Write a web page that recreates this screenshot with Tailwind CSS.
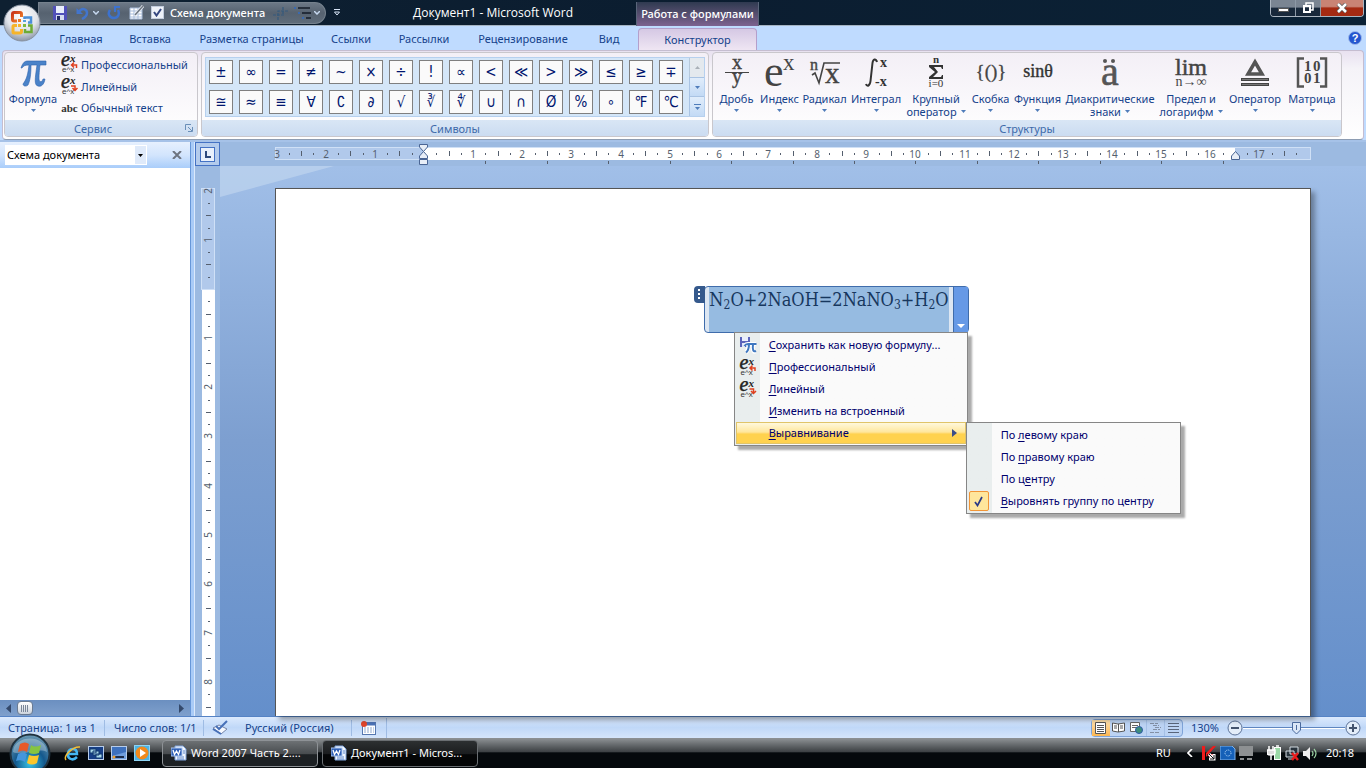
<!DOCTYPE html>
<html lang="ru">
<head>
    <meta charset="UTF-8">
    <meta name="viewport" content="width=device-width, initial-scale=1.0">
    <title>Документ1 - Microsoft Word</title>
    <script src="https://cdn.jsdelivr.net/npm/@tailwindcss/browser@4"></script>
</head>
<body class="h-screen flex flex-col overflow-hidden bg-[#bfdbff] font-['Noto_Sans','Open_Sans',sans-serif] text-[11px] leading-4 text-[#15428b]">

    <!-- Shared icons -->
    <svg class="hidden">
        <symbol id="ex-up" viewBox="0 0 17 17" overflow="visible">
            <text x="0" y="10" font-family="Liberation Serif" font-size="20" font-style="italic" stroke="#222" stroke-width=".5" fill="#222">e</text>
            <text x="9" y="6" font-family="Liberation Serif" font-size="11" font-style="italic" font-weight="bold" fill="#222">x</text>
            <text x="1" y="16" font-family="Liberation Sans" font-size="8" fill="#333">e^x</text>
            <path d="M15.500 12V9H11M13 6.500L10.500 9L13 11.500" fill="none" stroke="#e0401f" stroke-width="1.500"/>
        </symbol>
        <symbol id="ex-down" viewBox="0 0 17 17" overflow="visible">
            <text x="0" y="10" font-family="Liberation Serif" font-size="20" font-style="italic" stroke="#222" stroke-width=".5" fill="#222">e</text>
            <text x="9" y="6" font-family="Liberation Serif" font-size="11" font-style="italic" font-weight="bold" fill="#222">x</text>
            <text x="1" y="16" font-family="Liberation Sans" font-size="8" fill="#333">e^x</text>
            <path d="M10 8H14V12M11.500 10L14 12.500L16.500 10" fill="none" stroke="#e0401f" stroke-width="1.500"/>
        </symbol>
        <symbol id="word-doc" viewBox="0 0 16 16">
            <path d="M4 1H12L15 4V15H4Z" fill="#f4f8ff" stroke="#7ea3dc"/>
            <path d="M12 6H14M12 8H14M6 12H13M6 14H13" stroke="#5b85c8"/>
            <rect x="0" y="3" width="11" height="8" fill="#2f5fb5" stroke="#a9c4ee"/>
            <path d="M2 5L3.500 9.500L5.500 6L7.500 9.500L9 5" fill="none" stroke="#fff" stroke-width="1.300"/>
        </symbol>
        <symbol id="arrow-down" viewBox="0 0 5 3">
            <path d="M0 0H5L2.500 3Z" fill="currentColor"/>
        </symbol>
    </svg>

    <!-- Title bar -->
    <header class="relative flex h-[26px] shrink-0 items-center bg-linear-to-r from-[#0e2031] via-[#0b1d30] to-[#0b2236] border-b border-[#a5b4c3] text-white">
        <!-- Quick access toolbar -->
        <div class="ml-[38px] flex h-[22px] w-[288px] shrink-0 items-center rounded-r-full rounded-tl-lg border border-[#75818d] bg-linear-to-b from-[#6c7886] via-[#566270] to-[#5f6c7a] pl-[14px] whitespace-nowrap [&_svg]:shrink-0">
            <button aria-label="Сохранить"><svg width="14" height="14" viewBox="0 0 14 14"><path d="M0 0H14V14H0Z" fill="#5150b8"/><path d="M3 0H11V7H3Z" fill="#e9eefc"/><path d="M3 9H11V14H3Z" fill="#d6dcf0"/><path d="M4 10H7V14H4Z" fill="#222a66"/></svg></button>
            <button aria-label="Отменить" class="ml-2 flex items-center gap-1"><svg width="14" height="14" viewBox="0 0 14 14"><path d="M1.500 2V8H8Z" fill="#4275cc"/><path d="M4 6C7 1 12 3 12 7C12 10 9 12 7 13" fill="none" stroke="#4275cc" stroke-width="2.500"/></svg><svg width="6" height="4" viewBox="0 0 6 4"><path d="M0 0L3 3L6 0" fill="none" stroke="#c6d8ef" stroke-width="1.500"/></svg></button>
            <button aria-label="Повторить" class="ml-2"><svg width="14" height="14" viewBox="0 0 14 14"><path d="M3 4C0 8 3 12 7 12C11 12 13 8 11 4" fill="none" stroke="#3c72cf" stroke-width="2.500"/><path d="M8 6V1H13" fill="none" stroke="#3c72cf" stroke-width="2"/></svg></button>
            <button aria-label="Нарисовать таблицу" class="ml-2"><svg width="16" height="15" viewBox="0 0 16 15"><path d="M1 3H13V14H1Z" fill="#fff" stroke="#a9bddb"/><path d="M1 6H13M1 9H13M1 12H13M5 3V14M9 3V14" stroke="#a9bddb"/><path d="M6 10L14 1" stroke="#e9eef6" stroke-width="3"/><path d="M6 10L14 1" stroke="#6d7680" stroke-width="1.500"/></svg></button>
            <label class="ml-1.5 flex items-center gap-1.5 font-medium">
                <input type="checkbox" checked class="peer sr-only">
                <span class="grid size-[13px] place-items-center border border-[#c3cddd] bg-[#eef2f8]"><svg width="9" height="9" viewBox="0 0 9 9"><path d="M1 4L3.500 7.500L8 1" fill="none" stroke="#35477f" stroke-width="2"/></svg></span>
                <span>Схема документа</span>
            </label>
            <svg class="ml-2" width="16" height="14" viewBox="0 0 16 14"><path d="M0 9H12M5 14V5H15M10 1V9" fill="none" stroke="#34597c" stroke-width="1.200" stroke-dasharray="3 1"/></svg>
            <button aria-label="Список" class="ml-1 flex items-center gap-0.5"><svg width="19" height="14" viewBox="0 0 19 14"><path d="M5 2H17M9 7H18M13 12H18" stroke="#141d28" stroke-width="1.500"/><path d="M1 2H3M5 7H7M9 12H11" stroke="#3a6ab0" stroke-width="2"/></svg><svg width="6" height="4" viewBox="0 0 6 4"><path d="M0 0L3 3L6 0" fill="none" stroke="#c6d8ef" stroke-width="1.500"/></svg></button>
        </div>
        <button aria-label="Настройка панели" class="ml-2"><svg width="6" height="7" viewBox="0 0 6 7"><path d="M0 0.500H6" stroke="#d7e4f6"/><path d="M0.500 3H5.500L3 6Z" fill="none" stroke="#d7e4f6"/></svg></button>
        <h1 class="ml-[73px] font-['Open_Sans',sans-serif] text-[12px] whitespace-nowrap">Документ1 - Microsoft Word</h1>
        <div class="absolute left-[636px] top-0.5 grid h-6 w-[123px] place-items-center border-x border-[#59657a] bg-linear-to-b from-[#2f3a50] to-[#7d6290] font-medium whitespace-nowrap">Работа с формулами</div>
        <!-- Window buttons -->
        <div class="mr-0.5 ml-auto flex h-[17px] self-start overflow-hidden rounded-b border border-t-0 border-[#aab4bf]">
            <button aria-label="Свернуть" class="grid w-[25px] place-items-center border-r border-[#8d99a6] bg-linear-to-b from-[#7a8592] from-45% to-[#18283a] to-50%"><svg width="11" height="10" viewBox="0 0 11 10"><rect x="0.500" y="5.500" width="10" height="3" fill="#fff" stroke="#555"/></svg></button>
            <button aria-label="Восстановить" class="grid w-[25px] place-items-center border-r border-[#8d99a6] bg-linear-to-b from-[#7a8592] from-45% to-[#18283a] to-50%"><svg width="12" height="12" viewBox="0 0 12 12"><path d="M4 3V1H11V8H9" fill="none" stroke="#fff" stroke-width="1.500"/><rect x="2" y="4" width="6" height="6" fill="none" stroke="#fff" stroke-width="2"/></svg></button>
            <button aria-label="Закрыть" class="grid w-[42px] place-items-center bg-linear-to-b from-[#c98475] from-40% to-[#a52a12] to-50%"><svg width="12" height="10" viewBox="0 0 12 10"><path d="M2 1L10 9M10 1L2 9" stroke="#555" stroke-width="4"/><path d="M2 1L10 9M10 1L2 9" stroke="#fff" stroke-width="2.500"/></svg></button>
        </div>
    </header>

    <!-- Office button -->
    <button aria-label="Кнопка Office" class="absolute left-[3px] top-1 z-10">
        <svg width="38" height="38" viewBox="0 0 38 38">
            <defs>
                <radialGradient id="orb" cx=".5" cy=".3" r=".7"><stop offset="0" stop-color="#fff"/><stop offset=".6" stop-color="#e1e4ea"/><stop offset="1" stop-color="#8c96a6"/></radialGradient>
                <linearGradient id="red" x2="1" y2="1"><stop offset="0" stop-color="#c9341a"/><stop offset="1" stop-color="#f58a2a"/></linearGradient>
            </defs>
            <circle cx="19" cy="19" r="18" fill="url(#orb)" stroke="#8892a1"/>
            <g fill="none">
                <path d="M14 17H11Q9.500 17 9.500 15.500V10Q9.500 8.500 11 8.500H17Q18.500 8.500 18.500 10V13" stroke="url(#red)" stroke-width="3"/>
                <path d="M21.500 15V13.500H28V18.500H25" stroke="#4a8fd8" stroke-width="2.500"/>
                <path d="M14 21.500H11Q10 21.500 10 22.500V28Q10 29 11 29H17Q18.500 29 18.500 27.500V25" stroke="#f6b42a" stroke-width="3"/>
                <path d="M25 21.500H28.500V28H22V25" stroke="#6cab35" stroke-width="2.500"/>
            </g>
            <rect x="15" y="15" width="3" height="3" fill="#ef7a24"/>
            <rect x="20" y="16" width="3" height="2" fill="#58a0e0"/>
            <rect x="15" y="20" width="3" height="3" fill="#f6b42a"/>
            <rect x="20" y="20" width="3" height="3" fill="#7cb942"/>
        </svg>
    </button>

    <!-- Ribbon tabs -->
    <nav class="flex h-6 shrink-0 bg-[#bfdbff] pl-[47px] text-center leading-[26px] whitespace-nowrap">
        <a href="#" class="w-[68px]">Главная</a>
        <a href="#" class="w-[70px]">Вставка</a>
        <a href="#" class="w-[133px]">Разметка страницы</a>
        <a href="#" class="w-[66px]">Ссылки</a>
        <a href="#" class="w-[80px]">Рассылки</a>
        <a href="#" class="w-[118px]">Рецензирование</a>
        <a href="#" class="w-[54px]">Вид</a>
        <a href="#" class="mt-0.5 ml-0.5 w-[119px] rounded-t border border-b-0 border-[#b49fcb] bg-linear-to-b from-[#d5c8e4] to-[#efe6f3] leading-[21px]">Конструктор</a>
        <button aria-label="Справка" class="mr-1 ml-auto"><svg width="14" height="14" viewBox="0 0 14 14"><circle cx="7" cy="7" r="6.500" fill="#2456cf" stroke="#9db9ec"/><text x="7" y="11" text-anchor="middle" font-family="Liberation Sans" font-weight="bold" font-size="11" fill="#fff">?</text></svg></button>
    </nav>

    <!-- Ribbon -->
    <section class="mx-0.5 flex h-[90px] shrink-0 gap-[3px] rounded border border-[#c5bdd0] border-b-[#8d9db3] bg-linear-to-b from-[#e8e1f0] via-[#f5f3f8] via-20% to-white px-px pt-px pb-0.5 whitespace-nowrap">
        <!-- Service group -->
        <div class="flex w-[194px] flex-col overflow-hidden rounded border border-[#c9c7cc] bg-linear-to-b from-[#f3eff6] to-white">
            <div class="flex flex-1">
                <button class="flex w-14 flex-col items-center">
                    <svg width="28" height="28" viewBox="0 0 28 28" class="mt-1.5"><path d="M2 9C4 3 6 2 9 2H27V6H21C20 14 20 18 20 20C20 23 23 24 24 20H26C25 26 22 28 19 27C15 26 16 20 18 6H12C12 15 11 22 9 26C7 28 4 27 4 25C8 20 9 14 10 6C6 6 4 7 3 9Z" fill="#4a82c9" stroke="#2e62ab" stroke-width=".6"/></svg>
                    <span class="mt-1">Формула</span>
                    <svg class="mt-0.5 text-[#4f7cba]" width="5" height="3"><use href="#arrow-down"/></svg>
                </button>
                <div class="flex flex-col items-start gap-[5px] pt-[3px]">
                    <button class="flex items-center gap-[3px]"><svg width="17" height="17"><use href="#ex-up"/></svg>Профессиональный</button>
                    <button class="flex items-center gap-[3px]"><svg width="17" height="17"><use href="#ex-down"/></svg>Линейный</button>
                    <button class="flex items-center gap-[3px]"><span class="w-[17px] font-['Liberation_Serif',serif] text-[11px] font-bold text-[#333]">abc</span>Обычный текст</button>
                </div>
            </div>
            <div class="relative h-4 bg-linear-to-b from-[#d9e6f5] to-[#cbdcf1] pr-4 text-center leading-[18px] text-[#3e6aaa]">Сервис
                <button aria-label="Параметры" class="absolute right-1 top-1"><svg width="8" height="8" viewBox="0 0 8 8"><path d="M0.500 6V0.500H6M3 3L7 7M7.500 3V7.500H3" fill="none" stroke="#6a8fb8"/></svg></button>
            </div>
        </div>

        <!-- Symbols group -->
        <div class="flex w-[508px] flex-col overflow-hidden rounded border border-[#c9c7cc] bg-linear-to-b from-[#f3eff6] to-white">
            <div class="flex-1 px-[3px] pt-1">
                <div class="flex h-[60px] border border-[#b6d0ee] bg-[#d4e6f8]">
                    <div id="symbols" class="grid flex-1 grid-cols-[repeat(16,24px)] content-start gap-1.5 pt-0.5 pl-[3px]"></div>
                    <div class="flex w-[15px] flex-col text-[#4f7cba]">
                        <button aria-label="Вверх" class="grid flex-1 place-items-center border-l border-[#b6c8da] bg-[#e4e9ee] text-[#a9b0b8]"><svg width="5" height="3" class="rotate-180"><use href="#arrow-down"/></svg></button>
                        <button aria-label="Вниз" class="grid flex-1 place-items-center border-t border-l border-[#a9c3e3] bg-linear-to-b from-[#e1edfb] to-[#c3daf5]"><svg width="5" height="3"><use href="#arrow-down"/></svg></button>
                        <button aria-label="Дополнительно" class="grid flex-1 place-items-center border-t border-l border-[#a9c3e3] bg-linear-to-b from-[#e1edfb] to-[#c3daf5]"><svg width="7" height="6" viewBox="0 0 7 6"><path d="M0 .5H7" stroke="#4f7cba"/><path d="M1 3H6L3.500 6Z" fill="#4f7cba"/></svg></button>
                    </div>
                </div>
            </div>
            <div class="h-4 bg-linear-to-b from-[#d9e6f5] to-[#cbdcf1] text-center leading-[18px] text-[#3e6aaa]">Символы</div>
        </div>

        <!-- Structures group -->
        <div class="flex w-[630px] flex-col overflow-hidden rounded border border-[#c9c7cc] bg-linear-to-b from-[#f3eff6] to-white">
            <div class="flex h-[67px] pl-0.5 leading-[13px] [&_svg]:shrink-0 [&_svg]:overflow-visible">
                <button class="flex w-[43px] flex-col items-center pt-1.5">
                    <svg width="26" height="33" viewBox="0 0 26 33" fill="#444" font-family="Liberation Serif" font-size="20" text-anchor="middle"><text x="13" y="10" stroke="#444" stroke-width=".4">x</text><path d="M1 13H25V14H1Z"/><text x="13" y="24" stroke="#444" stroke-width=".4">y</text></svg>
                    <span>Дробь</span><svg class="mt-1 text-[#4f7cba]" width="5" height="3"><use href="#arrow-down"/></svg>
                </button>
                <button class="flex w-[43px] flex-col items-center pt-1.5">
                    <svg width="32" height="33" viewBox="0 0 32 33" fill="#444" font-family="Liberation Serif"><text x="0" y="27" font-size="44">e</text><text x="19" y="11" font-size="23">x</text></svg>
                    <span>Индекс</span><svg class="mt-1 text-[#4f7cba]" width="5" height="3"><use href="#arrow-down"/></svg>
                </button>
                <button class="flex w-[47px] flex-col items-center pt-1.5">
                    <svg width="32" height="33" viewBox="0 0 32 33" fill="#444" font-family="Liberation Serif"><text x="1" y="11" font-size="16" stroke="#444" stroke-width=".4">n</text><path d="M3 16L6 14L10 24L15 4H31" fill="none" stroke="#444" stroke-width="1.600"/><text x="16" y="24" font-size="29" stroke="#444" stroke-width=".4">x</text></svg>
                    <span>Радикал</span><svg class="mt-1 text-[#4f7cba]" width="5" height="3"><use href="#arrow-down"/></svg>
                </button>
                <button class="flex w-[56px] flex-col items-center pt-1.5">
                    <svg width="24" height="33" viewBox="0 0 24 33" fill="#333" font-family="Liberation Serif" font-size="14" font-weight="bold"><path d="M13 3C12 -1 9 0 8.500 4L6.500 22C6 27 3 28 2 25" fill="none" stroke="#333" stroke-width="2"/><text x="16" y="8">x</text><text x="11" y="27">-x</text></svg>
                    <span>Интеграл</span><svg class="mt-1 text-[#4f7cba]" width="5" height="3"><use href="#arrow-down"/></svg>
                </button>
                <button class="flex w-[64px] flex-col items-center pt-1.5">
                    <svg width="20" height="33" viewBox="0 0 20 33" fill="#333" font-family="Liberation Serif" text-anchor="middle"><text x="10" y="4" font-size="11" font-weight="bold">n</text><path d="M3 6H17V10H16L15 8H8L12 13L7 18H15L16 16H17V20H3V18L9 13L3 8Z"/><text x="10" y="28" font-size="11">i=0</text></svg>
                    <span>Крупный</span><span class="flex items-center gap-1">оператор<svg class="text-[#4f7cba]" width="5" height="3"><use href="#arrow-down"/></svg></span>
                </button>
                <button class="flex w-[45px] flex-col items-center pt-1.5">
                    <svg width="34" height="33" viewBox="0 0 34 33" fill="#444" font-family="Liberation Serif" font-size="19" text-anchor="middle"><text x="17" y="19" stroke="#444" stroke-width=".3">{()}</text></svg>
                    <span>Скобка</span><svg class="mt-1 text-[#4f7cba]" width="5" height="3"><use href="#arrow-down"/></svg>
                </button>
                <button class="flex w-[49px] flex-col items-center pt-1.5">
                    <svg width="34" height="33" viewBox="0 0 34 33" fill="#333" stroke="#333" stroke-width=".4" font-family="Liberation Serif" font-size="18" text-anchor="middle"><text x="17" y="18">sinθ</text></svg>
                    <span>Функция</span><svg class="mt-1 text-[#4f7cba]" width="5" height="3"><use href="#arrow-down"/></svg>
                </button>
                <button class="flex w-[96px] flex-col items-center pt-1.5">
                    <svg width="24" height="33" viewBox="0 0 24 33" fill="#555" font-family="Liberation Serif" font-size="40" text-anchor="middle"><text x="12" y="26" stroke="#555" stroke-width=".6">a</text><circle cx="7" cy="2" r="2"/><circle cx="15" cy="2" r="2"/></svg>
                    <span>Диакритические</span><span class="flex items-center gap-1">знаки<svg class="text-[#4f7cba]" width="5" height="3"><use href="#arrow-down"/></svg></span>
                </button>
                <button class="flex w-[66px] flex-col items-center pt-1.5">
                    <svg width="34" height="33" viewBox="0 0 34 33" fill="#444" font-family="Liberation Serif" text-anchor="middle"><text x="17" y="16" font-size="24" stroke="#444" stroke-width=".5">lim</text><text x="17" y="27" font-size="14">n→∞</text></svg>
                    <span>Предел и</span><span class="flex items-center gap-1">логарифм<svg class="text-[#4f7cba]" width="5" height="3"><use href="#arrow-down"/></svg></span>
                </button>
                <button class="flex w-[62px] flex-col items-center pt-1.5">
                    <svg width="30" height="33" viewBox="0 0 30 33"><path d="M15 3L22 15H8Z" fill="none" stroke="#555" stroke-width="3.500"/><path d="M1 20.500H29M1 25.500H29" stroke="#444" stroke-width="3"/><path d="M2 20.500H28M2 25.500H28" stroke="#777" stroke-width="1"/></svg>
                    <span>Оператор</span><svg class="mt-1 text-[#4f7cba]" width="5" height="3"><use href="#arrow-down"/></svg>
                </button>
                <button class="flex w-[52px] flex-col items-center pt-1.5">
                    <svg width="32" height="33" viewBox="0 0 32 33" fill="#444" font-family="Liberation Serif" font-size="15" font-weight="bold"><path d="M8 -.5H2V27.500H8M24 -.5H30V27.500H24" fill="none" stroke="#555" stroke-width="2.500"/><text x="8" y="12">1</text><text x="17" y="12">0</text><text x="8" y="24">0</text><text x="17" y="24">1</text></svg>
                    <span>Матрица</span><svg class="mt-1 text-[#4f7cba]" width="5" height="3"><use href="#arrow-down"/></svg>
                </button>
            </div>
            <div class="h-4 bg-linear-to-b from-[#d9e6f5] to-[#cbdcf1] text-center leading-[18px] text-[#3e6aaa]">Структуры</div>
        </div>
    </section>

    <main class="flex min-h-0 flex-1 border-t-2 border-[#a6c2e8]">
        <!-- Document map pane -->
        <aside class="flex w-[190px] flex-col bg-white">
            <div class="flex h-[26px] items-center bg-linear-to-b from-[#e6f0fe] via-[#d3e5fd] to-[#a9cdfa] pl-[5px]">
                <div class="relative">
                    <select aria-label="Область" class="h-5 w-[142px] appearance-none bg-white pl-0.5 text-[11px] text-black"><option>Схема документа</option></select>
                    <span class="pointer-events-none absolute right-px top-px grid h-[18px] w-[11px] place-items-center bg-[#dfeafa] text-black"><svg width="5" height="3"><use href="#arrow-down"/></svg></span>
                </div>
                <button aria-label="Закрыть область" class="mr-2 ml-auto"><svg width="10" height="8" viewBox="0 0 10 8"><path d="M1 0L9 8M9 0L1 8" stroke="#6d7480" stroke-width="2"/></svg></button>
            </div>
            <div class="flex-1"></div>
            <div class="flex h-4 items-center bg-linear-to-b from-[#6b8fc0] to-[#7fa0cc] px-1.5 text-[#34496b]">
                <svg width="5" height="9" viewBox="0 0 5 9"><path d="M5 0V9L0 4.500Z" fill="currentColor"/></svg>
                <button aria-label="Прокрутка" class="ml-1.5 flex h-[14px] w-4 items-center justify-center rounded-sm border border-[#6a7b92] bg-linear-to-b from-white to-[#ccd3dc]">
                    <svg width="8" height="7" viewBox="0 0 8 7"><path d="M.5 0V7M2.500 0V7M4.500 0V7M6.500 0V7" stroke="#7a8799"/></svg>
                </button>
                <svg class="ml-auto" width="5" height="9" viewBox="0 0 5 9"><path d="M0 0V9L5 4.500Z" fill="currentColor"/></svg>
            </div>
        </aside>
        <div class="w-[5px] border-x border-l-[#6797d8] border-r-[#dbe9fb] bg-[#a9cbf7]"></div>

        <div class="flex min-w-0 flex-1 flex-col">
            <!-- Horizontal ruler -->
            <div class="flex h-6 shrink-0 bg-[#9cbae1]">
                <button aria-label="Табуляция" class="grid w-[25px] place-items-center border border-[#4472c4] bg-[#b3cbec]"><svg width="15" height="15" viewBox="0 0 15 15"><rect x=".5" y=".5" width="14" height="14" fill="#e9f1fc" stroke="#4472c4"/><path d="M6 4V10H11" fill="none" stroke="#2e4a7c" stroke-width="2"/></svg></button>
                <svg id="ruler-h" class="min-w-0 flex-1" height="24" font-family="Noto Sans" font-size="10" fill="#555f6e" text-anchor="middle"></svg>
            </div>
            <div class="flex min-h-0 flex-1">
                <!-- Vertical ruler -->
                <svg id="ruler-v" class="h-full w-[25px] shrink-0 bg-[#9cbae1]" font-family="Noto Sans" font-size="10" fill="#555f6e" text-anchor="middle"></svg>

                <!-- Workspace -->
                <div class="relative flex min-w-0 flex-1 bg-linear-to-b from-[#a1bfe8] via-[#7d9fd0] via-50% to-[#648fcb] px-[55px] pt-[22px]">
                    <svg class="absolute left-0 top-0" width="114" height="31" viewBox="0 0 114 31"><path d="M0 0H114L0 31Z" fill="#c5d8f0" fill-opacity=".6"/></svg>
                    <div class="relative flex flex-1 items-start justify-center border border-b-0 border-[#555] bg-white pt-[97px] pr-[60px] pl-[147px] shadow-[4px_4px_5px_#0005]">
                        <!-- Equation -->
                        <div class="relative flex h-[47px] rounded-sm border border-[#3f6cab] bg-[#dce6f2] text-[#17375e]">
                            <span class="absolute -left-[11px] -top-px grid h-[17px] w-[11px] place-items-center rounded-l bg-[#35598c]"><svg width="3" height="11" viewBox="0 0 3 11"><path d="M0 0H2V2H0ZM0 4H2V6H0ZM0 8H2V10H0Z" fill="#fff"/></svg></span>
                            <div class="mx-1 bg-[#96bbe1] font-['DejaVu_Serif_Condensed','DejaVu_Serif',serif] text-[18px] leading-[26px] whitespace-nowrap">N<sub class="text-[12px]">2</sub>O+2NaOH=2NaNO<sub class="text-[12px]">3</sub>+H<sub class="text-[12px]">2</sub>O</div>
                            <button aria-label="Параметры формулы" class="flex w-[15px] items-end justify-center border-l border-[#3f6cab] bg-[#6699e6] pb-1 text-white"><svg width="8" height="4" viewBox="0 0 8 4"><path d="M0 0H8L4 4Z" fill="currentColor"/></svg></button>

                            <!-- Equation menu -->
                            <div class="absolute right-0 top-[45px] z-10 w-[234px] border border-[#868686] bg-linear-to-r from-[#e9eeee] from-[25px] to-[#fafafa] to-[25px] p-px text-[#00006d] shadow-[4px_4px_2px_#0005]">
                                <div class="font-['Noto_Sans','Open_Sans',sans-serif] text-[11px] [&_u]:underline-offset-2">
                                    <button class="flex h-[22px] w-full items-center gap-3 pl-[3px]"><svg width="18" height="17" viewBox="0 0 18 17"><path d="M1 0H11V10H1Z" fill="#5a63bb"/><path d="M3 0H9V4H3Z" fill="#e9eefc"/><path d="M3 6H6V10H3Z" fill="#dfe5f8"/><path d="M6 8.500Q7 7 9 7H17M9.500 7Q9.500 13 7 15.500M14 7Q13 16 16.500 14.500" fill="none" stroke="#fff" stroke-width="4"/><path d="M5.500 9Q6.500 7 9 7H17.500M10 7Q10 13 7 15.500M14 7Q13 16 17 14" fill="none" stroke="#3f78c0" stroke-width="2"/></svg><span><u>С</u>охранить как новую формулу...</span></button>
                                    <button class="flex h-[22px] w-full items-center gap-3 pl-[3px]"><svg width="18" height="17"><use href="#ex-up"/></svg><span><u>П</u>рофессиональный</span></button>
                                    <button class="flex h-[22px] w-full items-center gap-3 pl-[3px]"><svg width="18" height="17"><use href="#ex-down"/></svg><span><u>Л</u>инейный</span></button>
                                    <button class="flex h-[22px] w-full items-center pl-[33px]"><span><u>И</u>зменить на встроенный</span></button>
                                    <button class="flex h-[22px] w-full items-center justify-between border border-[#e0c469] bg-linear-to-b from-[#fff8dc] via-[#ffe79c] via-45% to-[#ffd24e] to-55% pr-2 pl-8"><span><u>В</u>ыравнивание</span><svg width="5" height="8" viewBox="0 0 5 8"><path d="M0 0V8L5 4Z" fill="#3b4c88"/></svg></button>
                                </div>
                            </div>

                            <!-- Alignment submenu -->
                            <div class="absolute -right-[213px] top-[135px] z-20 w-[215px] border border-[#868686] bg-linear-to-r from-[#e9eeee] from-[25px] to-[#fafafa] to-[25px] p-px text-[#00006d] shadow-[4px_4px_2px_#0005]">
                                <div class="font-['Noto_Sans','Open_Sans',sans-serif] text-[11px] [&_u]:underline-offset-2">
                                    <button class="flex h-[22px] w-full items-center pl-[33px]"><span>По <u>л</u>евому краю</span></button>
                                    <button class="flex h-[22px] w-full items-center pl-[33px]"><span>По <u>п</u>равому краю</span></button>
                                    <button class="flex h-[22px] w-full items-center pl-[33px]"><span>По ц<u>е</u>нтру</span></button>
                                    <button class="flex h-[22px] w-full items-center gap-3 pl-px"><span class="grid size-5 place-items-center rounded-xs border border-[#f29536] bg-[#ffe69c]"><svg width="9" height="11" viewBox="0 0 9 11"><path d="M1 6L3.500 9.500L8 1" fill="none" stroke="#2a3a86" stroke-width="1.700"/></svg></span><span><u>В</u>ыровнять группу по центру</span></button>
                                </div>
                            </div>
                        </div>
                    </div>
                </div>
            </div>
        </div>
    </main>

    <!-- Status bar -->
    <footer class="flex h-[22px] shrink-0 items-center border-t border-[#5583c5] bg-linear-to-b from-[#dceafd] via-[#c0d8f8] via-50% to-[#d5e5fb] whitespace-nowrap">
        <span class="w-[105px] border-r border-[#9fbce4] pl-2">Страница: 1 из 1</span>
        <span class="w-[99px] border-r border-[#9fbce4] pl-[9px]">Число слов: 1/1</span>
        <svg class="ml-2" width="17" height="15" viewBox="0 0 17 15"><path d="M1 8L7 5L15 9L9 14Z" fill="#f6f9ff" stroke="#7484a8"/><path d="M1 9L9 14M4 6L7 9L15 1" fill="none" stroke="#4770b8" stroke-width="2"/></svg>
        <span class="ml-4 w-[107px] border-r border-[#9fbce4]">Русский (Россия)</span>
        <svg class="ml-[9px]" width="16" height="14" viewBox="0 0 16 14"><rect x="1.500" y="1.500" width="13" height="12" fill="#fff" stroke="#5577b0"/><path d="M2 3H14" stroke="#4a72b8" stroke-width="3"/><path d="M3 7H13M3 9H13M3 11H13" stroke="#8ea8cf" stroke-dasharray="2 1"/><circle cx="3" cy="3" r="3" fill="#e0452b"/></svg>
        <span class="ml-[9px] h-5 border-l border-[#9fbce4]"></span>
        <div class="ml-auto flex h-[18px] rounded-sm border border-[#7ea3d8] bg-[#bcd3f3]">
            <button aria-label="Разметка страницы" class="grid w-[18px] place-items-center bg-linear-to-b from-[#ffe3b0] to-[#fbb64f]"><svg width="11" height="12" viewBox="0 0 11 12"><path d="M.5 .5H10.500V11.500H.5Z" fill="#fff" stroke="#555"/><path d="M2 3.500H9M2 5.500H9M2 7.500H9M2 9.500H9" stroke="#555"/></svg></button>
            <button aria-label="Режим чтения" class="grid w-[18px] place-items-center"><svg width="13" height="11" viewBox="0 0 13 11"><path d="M.5 1L6 2L12.500 1V9L6 10L.5 9Z" fill="#fff" stroke="#555"/><path d="M6.500 2V10M2 4H5M2 6H5M8 4H11M8 6H11" stroke="#555"/></svg></button>
            <button aria-label="Веб-документ" class="grid w-[18px] place-items-center"><svg width="13" height="12" viewBox="0 0 13 12"><path d="M.5 .5H9.500V9.500H.5Z" fill="#fff" stroke="#666"/><path d="M2 3.500H8M2 5.500H8" stroke="#666"/><circle cx="9" cy="8" r="3.500" fill="#3f8f7c" stroke="#2c5aa8"/></svg></button>
            <button aria-label="Структура" class="grid w-[18px] place-items-center border-l border-[#a5c0e6]"><svg width="11" height="10" viewBox="0 0 11 10"><path d="M0 .5H8M3 2.500H9M5 4.500H11M3 6.500H10M0 9.500H9" stroke="#8390a5" stroke-dasharray="4 1"/></svg></button>
            <button aria-label="Черновик" class="grid w-[18px] place-items-center border-l border-[#a5c0e6]"><svg width="11" height="10" viewBox="0 0 11 10"><path d="M0 .5H11M0 3.500H11M0 6.500H11M0 9.500H11" stroke="#59657a"/></svg></button>
        </div>
        <button class="ml-2">130%</button>
        <button aria-label="Уменьшить" class="ml-2"><svg width="16" height="16" viewBox="0 0 16 16"><circle cx="8" cy="8" r="7" fill="#e3edf9" stroke="#5d7398"/><path d="M4 8H12" stroke="#44546e" stroke-width="2"/></svg></button>
        <div class="relative h-4 w-[102px]">
            <input type="range" min="0" max="100" value="53" aria-label="Масштаб" class="absolute inset-0 w-full opacity-0">
            <svg class="pointer-events-none" width="102" height="16" viewBox="0 0 102 16"><path d="M0 8.500H102" stroke="#fff"/><path d="M0 7.500H102" stroke="#5f86bf"/><path d="M49.500 2.500H57.500V10L53.500 14L49.500 10Z" fill="#dbe7f7" stroke="#4b6a9c"/><path d="M53.500 5V10" stroke="#4b6a9c"/></svg>
        </div>
        <button aria-label="Увеличить" class="mr-[5px]"><svg width="16" height="16" viewBox="0 0 16 16"><circle cx="8" cy="8" r="7" fill="#e3edf9" stroke="#5d7398"/><path d="M4 8H12M8 4V12" stroke="#44546e" stroke-width="2"/></svg></button>
    </footer>

    <!-- Taskbar -->
    <nav class="relative flex h-[30px] shrink-0 items-center bg-linear-to-b from-[#8b8f92] from-3% via-[#3f4346] via-45% to-[#05090c] to-50% pl-16 text-white whitespace-nowrap">
        <button aria-label="Пуск" class="absolute -top-[5px] left-[9px] h-[35px] overflow-hidden">
            <svg width="42" height="42" viewBox="0 0 42 42">
                <defs><radialGradient id="start" cx=".5" cy=".75" r=".75"><stop offset="0" stop-color="#35c3e8"/><stop offset=".5" stop-color="#14588c"/><stop offset="1" stop-color="#6f9cb5"/></radialGradient></defs>
                <circle cx="21" cy="21" r="19.500" fill="url(#start)" stroke="#20323f" stroke-width="2"/>
                <path d="M4 19C5 1 37 1 38 19C28 14 14 24 4 19Z" fill="#fff" fill-opacity=".3"/>
                <path d="M11 11Q16 8 20 11L18 19Q14 16 9 19Z" fill="#e8592a"/>
                <path d="M22 12Q26 15 32 12L30 20Q25 22 20 20Z" fill="#86c440"/>
                <path d="M9 21Q14 18 18 21L16 29Q12 26 7 28Z" fill="#4596dc"/>
                <path d="M20 22Q25 24 30 22L28 30Q23 33 18 30Z" fill="#fbc62c"/>
            </svg>
        </button>
        <div class="flex items-center gap-[7px]">
            <button aria-label="Internet Explorer"><svg width="17" height="17" viewBox="0 0 17 17"><path d="M13 12C8 17 3 13 4 8C5 3 13 2 13 9H4" fill="none" stroke="#45b6f2" stroke-width="2.500"/><path d="M2 15C-1 11 9 1 16 2" fill="none" stroke="#f3bd35" stroke-width="1.500"/></svg></button>
            <button aria-label="Переключение окон"><svg width="16" height="14" viewBox="0 0 16 14"><rect x=".5" y=".5" width="15" height="13" fill="#163f86" stroke="#b7cdea"/><path d="M2 3H8V7H2ZM5 5H11V9H5ZM8 8H14V12H8Z" fill="#a8d8e8" stroke="#10386f"/></svg></button>
            <button aria-label="Рабочий стол"><svg width="16" height="14" viewBox="0 0 16 14"><rect x=".5" y=".5" width="15" height="13" fill="#3e71bd" stroke="#b7cdea"/><path d="M1 13V10L15 6V13Z" fill="#6f9edc"/><path d="M3 11H13" stroke="#1d2c48" stroke-width="2"/><circle cx="3" cy="11" r="1.500" fill="#f29f2f"/></svg></button>
            <button aria-label="Проигрыватель"><svg width="16" height="16" viewBox="0 0 16 16"><rect x=".5" y=".5" width="15" height="15" fill="#4cb4e6" stroke="#8ed4f4"/><circle cx="8" cy="8" r="6.500" fill="#f28a1c"/><path d="M6 4V12L12 8Z" fill="#fff"/></svg></button>
        </div>
        <button class="ml-3 flex h-[27px] w-[156px] items-center gap-1 rounded border border-[#8e9296] bg-linear-to-b from-[#6d7174] via-[#494d50] via-50% to-[#1d2124] to-55% pl-2"><svg width="16" height="16"><use href="#word-doc"/></svg>Word 2007 Часть 2....</button>
        <button class="ml-1 flex h-[27px] w-[156px] items-center gap-1 rounded border border-[#6a6e72] bg-linear-to-b from-[#2d3032] via-[#1b1d1f] via-50% to-[#050607] to-55% pl-2"><svg width="16" height="16"><use href="#word-doc"/></svg>Документ1 - Micros...</button>
        <!-- Tray -->
        <div class="mr-3 ml-auto flex items-center">
            <span>RU</span>
            <svg class="ml-4" width="6" height="8" viewBox="0 0 6 8"><path d="M5 0L1 4L5 8" fill="none" stroke="#fff" stroke-width="1.700"/></svg>
            <svg class="ml-2" width="15" height="15" viewBox="0 0 15 15"><path d="M1 0V14H4V0ZM5 7L12 0H15L5 11ZM6 8L9 12L14 14L12 8" fill="#ef1c1c"/><path d="M8 8L13 13M13 8V13H8" stroke="#fff" stroke-width="3" fill="none"/><path d="M8 8L13 13M13 9V13H9" stroke="#111" fill="none"/></svg>
            <svg class="ml-1" width="16" height="14" viewBox="0 0 16 14"><path d="M0 0H12L15 3V14H0Z" fill="#1560b8" stroke="#7eb1e8"/><circle cx="8" cy="7" r="3" fill="none" stroke="#bfe0ff" stroke-dasharray="1 1"/></svg>
            <svg class="ml-[3px]" width="14" height="14" viewBox="0 0 14 14"><path d="M0 0H14V10H0ZM1 12H5V14H1ZM8 12H13V14H8Z" fill="#8d9092"/></svg>
            <svg class="ml-[14px]" width="14" height="16" viewBox="0 0 14 16"><rect x="7.500" y="2.500" width="6" height="12" fill="#9ad8a6" stroke="#fff"/><path d="M9 1H12M0 5H8V8Q8 10 4 10Q0 10 0 8ZM2 1V5M6 1V5M4 10V15" stroke="#fff" stroke-width="1.500" fill="#ddd"/></svg>
            <svg class="ml-1" width="15" height="15" viewBox="0 0 15 15"><path d="M5 1H13V8H5ZM1 5H9V11H1ZM3 13H8" fill="#28333c" stroke="#d5dde3"/><path d="M7 7L13 14M13 7L7 14" stroke="#e81c1c" stroke-width="2.500"/></svg>
            <svg class="ml-[3px]" width="15" height="15" viewBox="0 0 15 15"><path d="M0 5H3L7 1V14L3 10H0Z" fill="#eee"/><path d="M9 5Q11 7.500 9 10M11 3Q15 7.500 11 12" fill="none" stroke="#9ed5a6" stroke-width="1.200"/></svg>
            <time class="ml-2">20:18</time>
        </div>
    </nav>

    <script>
        // Fill the symbol gallery
        const symbols = ['±', '∞', '=', '≠', '~', '×', '÷', '!', '∝', '<', '≪', '>', '≫', '≤', '≥', '∓',
            '≅', '≈', '≡', '∀', '∁', '∂', '√', '∛', '∜', '∪', '∩', 'Ø', '%', '∘', '℉', '℃'];
        document.getElementById('symbols').innerHTML = symbols.map(s => `
            <button class="grid size-6 place-items-center border border-[#7f7f7f] bg-[#fafafa] font-['DejaVu_Sans_Condensed','DejaVu_Sans',sans-serif] text-[15px] leading-none text-[#00156e]">${s.replace('<', '&lt;')}</button>
        `).join('');

        // Rulers: one centimetre at 130% zoom
        const CM = 49.14;

        function drawTopRuler() {
            const zero = 204;
            let out = `
                <rect x="55.500" y="5.500" width="1035" height="12" fill="#b1c9eb" stroke="#cfe0f6"/>
                <rect x="203" y="6" width="812" height="12" fill="#fff"/>`;
            for (let q = -12; q <= 71; q++) {
                const x = Math.round(zero + q * CM / 4);
                if (q === 0 || q === 66) continue;
                if (q % 4 === 0) out += `<text x="${x}" y="16">${Math.abs(q / 4)}</text>`;
                else if (q % 2 === 0) out += `<rect x="${x}" y="9" width="1" height="5"/>`;
                else out += `<rect x="${x}" y="11" width="1" height="2"/>`;
            }
            for (let t = 1; t < 14; t++) {
                out += `<rect x="${Math.round(zero + t * CM * 1.25)}" y="19" width="1" height="3"/>`;
            }
            out += `
                <g fill="#e8eef7" stroke="#4a6594">
                    <path d="M199.500 2.500H207.500V5L203.500 9.500L199.500 5Z"/>
                    <path d="M203.500 9.500L207.500 14V16.500H199.500V14Z"/>
                    <path d="M199.500 17.500H207.500V22.500H199.500Z"/>
                    <path d="M1015.500 9.500L1019.500 14V17.500H1011.500V14Z"/>
                </g>`;
            document.getElementById('ruler-h').innerHTML = out;
        }

        function drawSideRuler() {
            const zero = 123;
            let out = `
                <rect x="6.500" y="22.500" width="13" height="101" fill="#b1c9eb" stroke="#cfe0f6"/>
                <rect x="7" y="124" width="13" height="600" fill="#fff"/>`;
            for (let q = -8; q <= 35; q++) {
                const y = Math.round(zero + q * CM / 4);
                if (q === 0) continue;
                if (q % 4 === 0) out += `<text transform="translate(17 ${y}) rotate(-90)">${Math.abs(q / 4)}</text>`;
                else if (q % 2 === 0) out += `<rect x="11" y="${y}" width="5" height="1"/>`;
                else out += `<rect x="13" y="${y}" width="2" height="1"/>`;
            }
            document.getElementById('ruler-v').innerHTML = out;
        }

        drawTopRuler();
        drawSideRuler();
    </script>
</body>
</html>
